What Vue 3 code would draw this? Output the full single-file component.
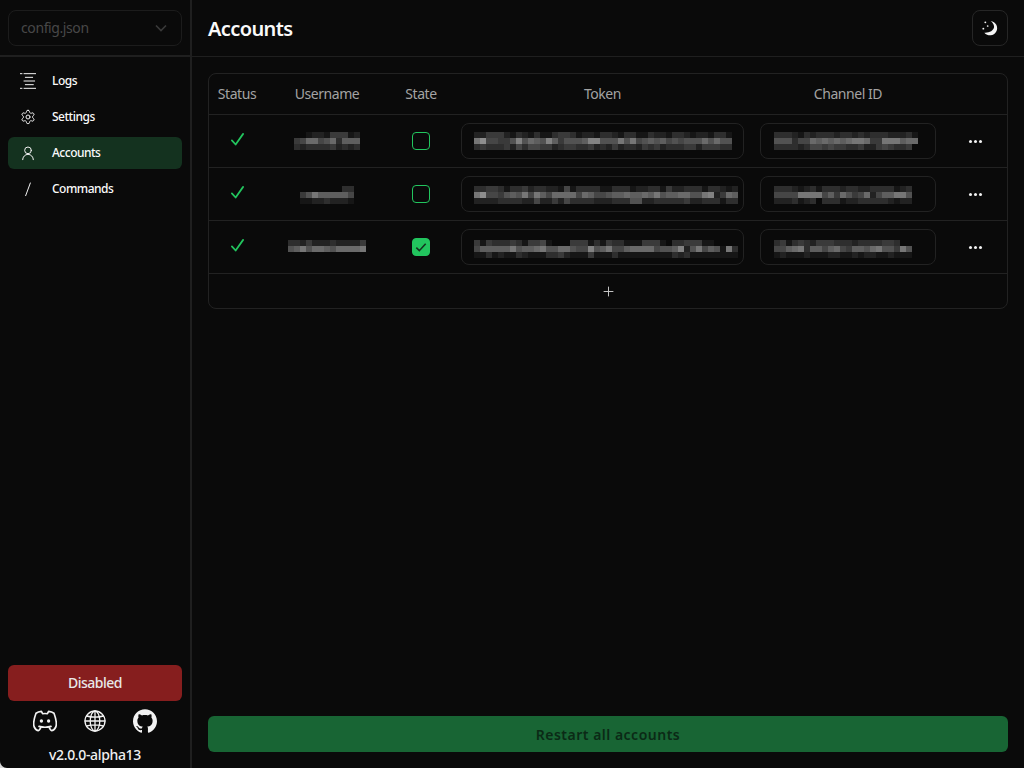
<template>
  <div class="app">
    <aside class="sidebar">
      <div class="sidebar-top">
        <div class="select">
          <span>config.json</span>
          <svg class="chev" viewBox="0 0 24 24"><path d="m6 9 6 6 6-6" /></svg>
        </div>
      </div>

      <nav class="nav">
        <a v-for="item in nav" :key="item.label" class="nav-item" :class="{ active: item.active }">
          <svg class="nav-icon" viewBox="0 0 24 24">
            <path v-for="d in item.icon" :key="d" :d="d" />
          </svg>
          <span>{{ item.label }}</span>
        </a>
      </nav>

      <div class="sidebar-bottom">
        <button class="disabled-btn">Disabled</button>
        <div class="links">
          <svg class="link-icon discord" viewBox="2 2 20 20">
            <path d="M15.5 17c0 1 1.5 3 2 3c1.5 0 2.833 -1.667 3.5 -3c.667 -1.667 .5 -5.833 -1.5 -11.5c-1.457 -1.015 -3 -1.34 -4.5 -1.5l-.972 1.923a11.913 11.913 0 0 0 -4.053 0l-.975 -1.923c-1.5 .16 -3.043 .485 -4.5 1.5c-2 5.667 -2.167 9.833 -1.5 11.5c.667 1.333 2 3 3.5 3c.5 0 2 -2 2 -3" />
            <path d="M7 16.5c3.5 1 6.5 1 10 0" />
            <circle class="solid" cx="9" cy="12" r="1.4" />
            <circle class="solid" cx="15" cy="12" r="1.4" />
          </svg>
          <svg class="link-icon globe" viewBox="0 0 24 24">
            <circle cx="12" cy="12" r="10" />
            <ellipse cx="12" cy="12" rx="4.8" ry="10" />
            <path d="M12 2v20M2 12h20M3.6 7c5 1.4 11.8 1.4 16.8 0M3.6 17c5-1.4 11.8-1.4 16.8 0" />
          </svg>
          <svg class="link-icon github" viewBox="0 0 24 24">
            <path d="M12 .297c-6.63 0-12 5.373-12 12 0 5.303 3.438 9.8 8.205 11.385.6.113.82-.258.82-.577 0-.285-.01-1.04-.015-2.04-3.338.724-4.042-1.61-4.042-1.61C4.422 18.07 3.633 17.7 3.633 17.7c-1.087-.744.084-.729.084-.729 1.205.084 1.838 1.236 1.838 1.236 1.07 1.835 2.809 1.305 3.495.998.108-.776.417-1.305.76-1.605-2.665-.3-5.466-1.332-5.466-5.93 0-1.31.465-2.38 1.235-3.22-.135-.303-.54-1.523.105-3.176 0 0 1.005-.322 3.3 1.23.96-.267 1.98-.399 3-.405 1.02.006 2.04.138 3 .405 2.28-1.552 3.285-1.23 3.285-1.23.645 1.653.24 2.873.12 3.176.765.84 1.23 1.91 1.23 3.22 0 4.61-2.805 5.625-5.475 5.92.42.36.81 1.096.81 2.22 0 1.606-.015 2.896-.015 3.286 0 .315.21.69.825.57C20.565 22.092 24 17.592 24 12.297c0-6.627-5.373-12-12-12" />
          </svg>
        </div>
        <div class="version">v2.0.0-alpha13</div>
      </div>
    </aside>

    <main class="main">
      <header class="topbar">
        <h1>Accounts</h1>
        <button class="theme-btn">
          <svg viewBox="0 0 24 24" class="theme-icon">
            <path class="moon" d="M13 1.5a10.8 10.8 0 1 1-9.5 17.5c7 .6 14-3 14.6-8.5c.3-3.5-2.5-7-5.1-9z" />
            <circle class="solid" cx="5" cy="3.5" r="1.4" />
            <circle class="solid" cx="2" cy="13" r="1.4" />
            <circle class="solid" cx="8.5" cy="9" r="1.3" />
          </svg>
        </button>
      </header>

      <section class="content">
        <div class="card">
          <table class="accounts">
            <colgroup>
              <col style="width: 56px" />
              <col style="width: 124px" />
              <col style="width: 64px" />
              <col style="width: 299px" />
              <col style="width: 192px" />
              <col />
            </colgroup>
            <thead>
              <tr>
                <th>Status</th>
                <th>Username</th>
                <th>State</th>
                <th>Token</th>
                <th>Channel ID</th>
                <th></th>
              </tr>
            </thead>
            <tbody>
              <tr v-for="acc in accounts" :key="acc.id" class="row">
                <td>
                  <svg class="status-check" viewBox="0 0 24 24"><path d="M3 13.5 9 20 21 3" /></svg>
                </td>
                <td>
                  <div class="mosaic center" :style="shift(acc)">
                    <div v-for="(line, i) in acc.name" :key="i" class="m-line">
                      <i v-for="(c, j) in line" :key="j" :style="{ background: grey(c) }"></i>
                    </div>
                  </div>
                </td>
                <td>
                  <span class="checkbox" :class="{ checked: acc.checked }">
                    <svg v-if="acc.checked" viewBox="0 0 24 24"><path d="m5 13 4.5 4.5L19 7" /></svg>
                  </span>
                </td>
                <td>
                  <div class="input">
                    <div class="mosaic" :style="shift(acc)">
                      <div v-for="(line, i) in acc.token" :key="i" class="m-line">
                        <i v-for="(c, j) in line" :key="j" :style="{ background: grey(c) }"></i>
                      </div>
                    </div>
                  </div>
                </td>
                <td>
                  <div class="input channel">
                    <div class="mosaic" :style="shift(acc)">
                      <div v-for="(line, i) in acc.channel" :key="i" class="m-line">
                        <i v-for="(c, j) in line" :key="j" :style="{ background: grey(c) }"></i>
                      </div>
                    </div>
                  </div>
                </td>
                <td>
                  <span class="dots"><b></b><b></b><b></b></span>
                </td>
              </tr>
              <tr class="add-row">
                <td colspan="6">
                  <svg class="plus" viewBox="0 0 24 24"><path d="M12 3v18M3 12h18" /></svg>
                </td>
              </tr>
            </tbody>
          </table>
        </div>

        <button class="restart">Restart all accounts</button>
      </section>
    </main>
  </div>
</template>

<script setup>
const nav = [
  {
    label: "Logs",
    icon: ["M0 1h3M6 1h18M8 6.5h11M6 12h16M8 17.5h12M0 23h3M6 23h18"]
  },
  {
    label: "Settings",
    icon: [
      "M12.22 2h-.44a2 2 0 0 0-2 2v.18a2 2 0 0 1-1 1.73l-.43.25a2 2 0 0 1-2 0l-.15-.08a2 2 0 0 0-2.73.73l-.22.38a2 2 0 0 0 .73 2.73l.15.1a2 2 0 0 1 1 1.72v.51a2 2 0 0 1-1 1.74l-.15.09a2 2 0 0 0-.73 2.73l.22.38a2 2 0 0 0 2.73.73l.15-.08a2 2 0 0 1 2 0l.43.25a2 2 0 0 1 1 1.73V20a2 2 0 0 0 2 2h.44a2 2 0 0 0 2-2v-.18a2 2 0 0 1 1-1.73l.43-.25a2 2 0 0 1 2 0l.15.08a2 2 0 0 0 2.73-.73l.22-.39a2 2 0 0 0-.73-2.73l-.15-.08a2 2 0 0 1-1-1.74v-.5a2 2 0 0 1 1-1.74l.15-.09a2 2 0 0 0 .73-2.73l-.22-.38a2 2 0 0 0-2.73-.73l-.15.08a2 2 0 0 1-2 0l-.43-.25a2 2 0 0 1-1-1.73V4a2 2 0 0 0-2-2z",
      "M15 12a3 3 0 1 1-6 0a3 3 0 0 1 6 0z"
    ]
  },
  {
    label: "Accounts",
    active: true,
    icon: ["M17 8a5 5 0 1 1-10 0a5 5 0 0 1 10 0z", "M20 22a8 8 0 0 0-16 0"]
  },
  { label: "Commands", icon: ["M15.5 3 8.5 22"] }
]

const accounts = [
  {
    id: 1,
    checked: false,
    shift: 0,
    name: ["00122144412", "45885683777", "32333342323"],
    token: [
      "2244421321311344312213321331132213321221331",
      "9b55446a6876a746667aa6669695676756566686866",
      "3433342535544234433423242332434233344244433"
    ],
    channel: [
      "333213233323323233322231",
      "666355878787899844999788",
      "333323554544334224543340"
    ]
  },
  {
    id: 2,
    checked: false,
    shift: 1,
    name: ["000000033", "469777775", "112232221"],
    token: [
      "33443133423322151333311333122331422333133212",
      "9b5546769597588885875567787787967788669a2487",
      "22223333225224253333222333662233333422333133"
    ],
    channel: [
      "333212313332332233331230",
      "555599995748645825779960",
      "222312303331223333321220"
    ]
  },
  {
    id: 3,
    checked: true,
    shift: 2,
    name: ["3324222322224", "6796887688889", "0000000000000"],
    token: [
      "41433343144510004441314331114441033444110000",
      "5777779677896688655a67955788885667a269576193",
      "11312113211133421114111311111111132311111111"
    ],
    channel: [
      "34134324443332333344300",
      "55789377578547768966496",
      "12111211122112122112111"
    ]
  }
]

function grey(c) {
  const v = 10 + parseInt(c, 16) * 12
  return `rgb(${v},${v},${v})`
}

function shift(acc) {
  return { marginTop: acc.shift * 2 + "px" }
}
</script>

<style>
html,
body {
  margin: 0;
  background: #d8d8d8;
}
</style>

<style scoped>
.app {
  display: flex;
  width: 1024px;
  height: 768px;
  overflow: hidden;
  background: #0a0a0a;
  border-bottom-left-radius: 7px;
  color: #fafafa;
  font-family: "Noto Sans", "Liberation Sans", sans-serif;
}

.sidebar {
  width: 190px;
  flex: none;
  display: flex;
  flex-direction: column;
  border-right: 2px solid #1f1f1f;
}

.sidebar-top {
  box-sizing: border-box;
  height: 57px;
  padding: 10px 8px;
  border-bottom: 2px solid #1f1f1f;
}

.select {
  box-sizing: border-box;
  height: 36px;
  padding: 0 10px 0 12px;
  display: flex;
  align-items: center;
  justify-content: space-between;
  border: 1px solid #1c1c1c;
  border-radius: 8px;
  font-size: 14px;
  letter-spacing: -0.4px;
  color: #484848;
}

.select span {
  padding-bottom: 2px;
}

.chev {
  width: 20px;
  height: 20px;
  fill: none;
  stroke: #3a3a3a;
  stroke-width: 2;
}

.nav {
  padding: 8px 8px 0;
  display: flex;
  flex-direction: column;
  gap: 4px;
}

.nav-item {
  height: 32px;
  display: flex;
  align-items: center;
  gap: 16px;
  padding-left: 12px;
  border-radius: 6px;
  font-size: 12px;
  font-weight: 500;
  letter-spacing: -0.5px;
}

.nav-item span {
  padding-bottom: 2px;
}

.nav-item.active {
  background: #14321f;
}

.nav-icon {
  width: 16px;
  height: 16px;
  fill: none;
  stroke: #f2f2f2;
  stroke-width: 1.5;
  stroke-linecap: round;
  stroke-linejoin: round;
}

.sidebar-bottom {
  margin-top: auto;
  padding: 0 8px 3px;
  display: flex;
  flex-direction: column;
}

.disabled-btn {
  height: 36px;
  padding: 0 0 2px;
  border: none;
  border-radius: 6px;
  background: #861e1e;
  color: #e8e8e8;
  font-family: inherit;
  font-size: 14px;
  font-weight: 500;
  letter-spacing: -0.5px;
}

.links {
  display: flex;
  justify-content: space-between;
  padding: 8px 25px 0;
}

.link-icon {
  width: 24px;
  height: 24px;
  fill: none;
  stroke: #f2f2f2;
  stroke-width: 1.6;
  stroke-linecap: round;
  stroke-linejoin: round;
}

.link-icon.discord {
  stroke-width: 1.4;
}

.link-icon.globe {
  stroke-width: 1.3;
}

.link-icon .solid {
  fill: #f2f2f2;
  stroke: none;
}

.link-icon.github {
  fill: #f2f2f2;
  stroke: none;
}

.version {
  margin-top: 12px;
  text-align: center;
  font-size: 14px;
  font-weight: 500;
  line-height: 20px;
  letter-spacing: -0.35px;
  color: #f0f0f0;
}

.main {
  flex: 1;
  min-width: 0;
  display: flex;
  flex-direction: column;
}

.topbar {
  box-sizing: border-box;
  height: 57px;
  flex: none;
  padding: 0 16px;
  display: flex;
  align-items: center;
  justify-content: space-between;
  border-bottom: 1px solid #1f1f1f;
}

.topbar h1 {
  margin: 0;
  font-size: 20px;
  font-weight: 600;
  letter-spacing: -0.6px;
}

.theme-btn {
  width: 36px;
  height: 36px;
  padding: 0;
  display: flex;
  align-items: center;
  justify-content: center;
  background: transparent;
  border: 1px solid #262626;
  border-radius: 8px;
}

.theme-icon {
  width: 16px;
  height: 16px;
}

.theme-icon .moon,
.theme-icon .solid {
  fill: #f5f5f5;
}

.content {
  flex: 1;
  min-height: 0;
  padding: 16px;
  display: flex;
  flex-direction: column;
  justify-content: space-between;
}

.card {
  border: 1px solid #222;
  border-radius: 8px;
  overflow: hidden;
}

.accounts {
  width: 100%;
  table-layout: fixed;
  border-collapse: separate;
  border-spacing: 0;
}

.accounts th {
  height: 38px;
  padding: 0 0 2px;
  font-size: 14px;
  font-weight: 400;
  letter-spacing: -0.45px;
  color: #a3a3a3;
}

.accounts td {
  padding: 0;
  text-align: center;
  vertical-align: middle;
  border-top: 1px solid #222;
}

.row td {
  height: 52px;
}

.status-check {
  display: block;
  width: 15px;
  height: 15px;
  margin: -4px auto 0;
  fill: none;
  stroke: #22c55e;
  stroke-width: 2.8;
  stroke-linecap: round;
  stroke-linejoin: round;
}

.checkbox {
  box-sizing: border-box;
  display: flex;
  width: 18px;
  height: 18px;
  margin: 0 auto;
  align-items: center;
  justify-content: center;
  border: 1px solid #22c55e;
  border-radius: 4px;
}

.checkbox.checked {
  background: #22c55e;
}

.checkbox svg {
  width: 16px;
  height: 16px;
  fill: none;
  stroke: #14331f;
  stroke-width: 2.4;
}

.input {
  box-sizing: border-box;
  height: 36px;
  margin: 0 8px;
  padding: 0 12px;
  display: flex;
  align-items: center;
  border: 1px solid #222;
  border-radius: 8px;
}

.input.channel {
  padding-left: 13px;
}

.mosaic.center {
  width: fit-content;
  margin-left: auto;
  margin-right: auto;
}

.m-line {
  display: flex;
  height: 6px;
}

.m-line i {
  display: block;
  flex: none;
  width: 6px;
  height: 6px;
}

.dots {
  display: flex;
  justify-content: center;
  gap: 2px;
}

.dots b {
  display: block;
  width: 3px;
  height: 3px;
  border-radius: 50%;
  background: #f2f2f2;
}

.add-row td {
  height: 34px;
}

.plus {
  display: block;
  width: 13px;
  height: 13px;
  margin: 0 auto;
  fill: none;
  stroke: #c8c8c8;
  stroke-width: 1.8;
}

.restart {
  height: 36px;
  flex: none;
  border: none;
  border-radius: 6px;
  background: #186534;
  color: #0b2a16;
  font-family: inherit;
  font-size: 14px;
  font-weight: 600;
  letter-spacing: 0.5px;
}
</style>
